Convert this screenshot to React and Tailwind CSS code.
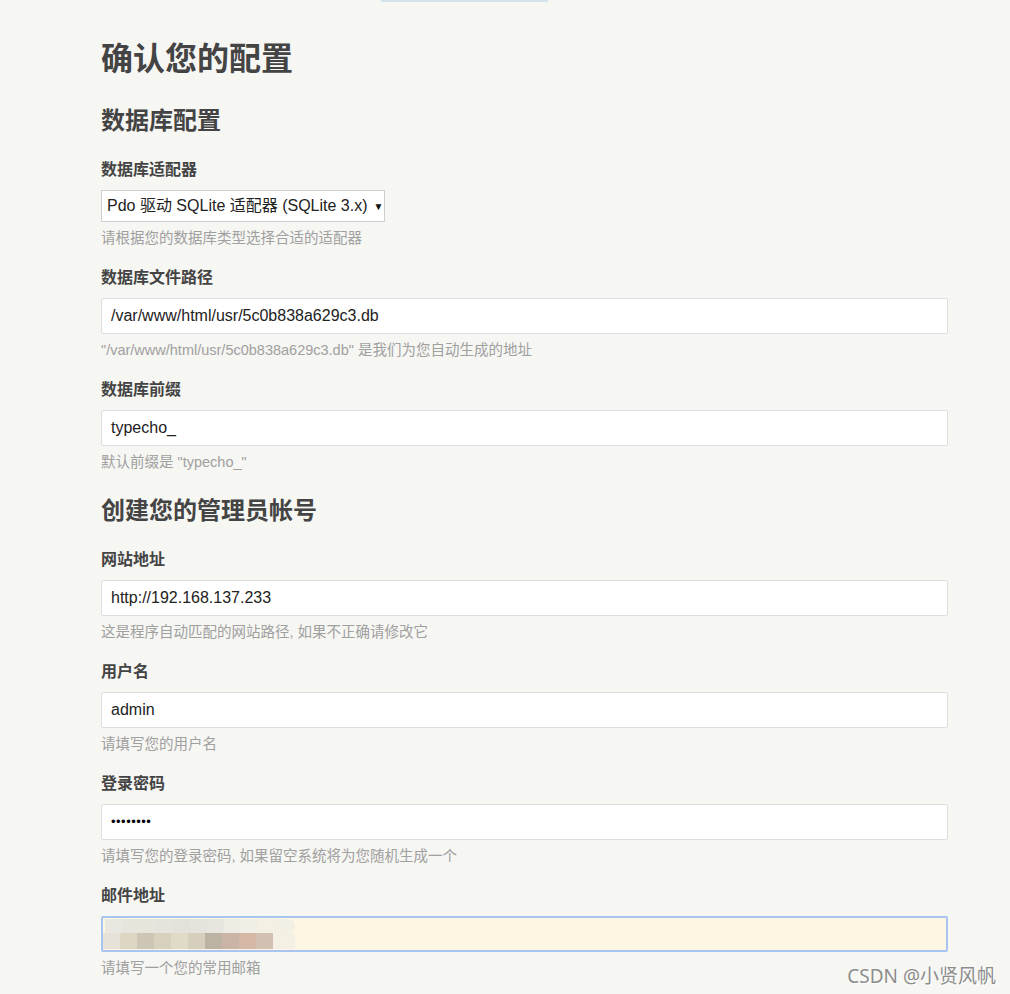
import React from 'react';

const FONT = { fontFamily: '"Liberation Sans", "Noto Sans CJK SC", sans-serif' };

const topBlocks = ['#e9e8e0', '#e6e5db', '#e6e5db', '#e5e4dc', '#e3e2da', '#e5e4dc', '#e6e6de', '#eeede4', '#f1efe5', '#f4f1e4'];
const midBlocks = ['#e6e2d8', '#ddd6c2', '#cdc6b6', '#d7d1bd', '#e0dbc6', '#d6cfbe', '#bdb3a4', '#c9b4a5', '#d4b7a4', '#d2c1b2'];

const Label = ({ children }) => (
  <div className="text-[16px] leading-[20px] font-bold text-[#444]">{children}</div>
);

const Desc = ({ children }) => (
  <div className="mt-[6px] text-[14.5px] leading-[20px] text-[#a0a0a0]">{children}</div>
);

const TextBox = ({ children }) => (
  <div className="mt-[10px] h-[36px] w-full flex items-center px-[9px] bg-white border border-[#dedede] rounded-[2px] text-[16px] text-[#222]">
    {children}
  </div>
);

const Field = ({ label, value, desc, first }) => (
  <div className={first ? '' : 'mt-[20px]'}>
    <Label>{label}</Label>
    <TextBox>{value}</TextBox>
    <Desc>{desc}</Desc>
  </div>
);

export default function App() {
  return (
    <div className="relative min-h-[994px] bg-[#f6f6f3]" style={FONT}>
      {/* top strip */}
      <div className="ml-[381px] w-[167px] h-[2px] bg-[#d3e2ec]" />

      <div className="ml-[101px] w-[847px]">
        <h1 className="mt-[37px] text-[32px] leading-[40px] font-bold text-[#444]">确认您的配置</h1>

        <h2 className="mt-[27px] text-[24px] leading-[30px] font-bold text-[#444]">数据库配置</h2>

        <div className="mt-[24px]">
          <Label>数据库适配器</Label>
          <div className="mt-[10px] h-[32px] w-[284px] flex items-center gap-[6px] pl-[5px] bg-white border border-[#cfcfcf] text-[16px] text-[#222]">
            <span>Pdo 驱动 SQLite 适配器 (SQLite 3.x)</span>
            <span className="text-[10px] text-[#111]">▼</span>
          </div>
          <Desc>请根据您的数据库类型选择合适的适配器</Desc>
        </div>

        <Field label="数据库文件路径" value="/var/www/html/usr/5c0b838a629c3.db" desc={'"/var/www/html/usr/5c0b838a629c3.db" 是我们为您自动生成的地址'} />
        <Field label="数据库前缀" value="typecho_" desc={'默认前缀是 "typecho_"'} />

        <h2 className="mt-[24px] text-[24px] leading-[30px] font-bold text-[#444]">创建您的管理员帐号</h2>

        <div className="mt-[24px]">
          <Field first label="网站地址" value="http://192.168.137.233" desc="这是程序自动匹配的网站路径, 如果不正确请修改它" />
        </div>
        <Field label="用户名" value="admin" desc="请填写您的用户名" />
        <Field
          label="登录密码"
          value={<span className="text-[13px] tracking-[0.5px] text-black">••••••••</span>}
          desc="请填写您的登录密码, 如果留空系统将为您随机生成一个"
        />

        <div className="mt-[20px]">
          <Label>邮件地址</Label>
          <div className="mt-[10px] h-[36px] w-full flex flex-col justify-center bg-[#fcf6e2] border-2 border-[#a8c4f0] rounded-[2px] overflow-hidden">
            <div className="flex h-[14px] pl-[2px]">
              {topBlocks.map((c, i) => (
                <div key={i} className="w-[17px] h-full" style={{ background: c }} />
              ))}
              <div className="w-[20px] h-full rounded-r-full bg-[#f2efe4]" />
            </div>
            <div className="flex h-[16px]">
              {midBlocks.map((c, i) => (
                <div key={i} className="w-[17px] h-full" style={{ background: c }} />
              ))}
              <div className="w-[22px] h-full bg-[#f4f0e3]" />
            </div>
          </div>
          <Desc>请填写一个您的常用邮箱</Desc>
        </div>
      </div>

      {/* watermark */}
      <div
        className="absolute right-[14px] bottom-[6px] text-[19px] leading-[24px] text-[#8c8c8c]"
        style={{ fontFamily: '"Noto Sans", "Noto Sans CJK SC", sans-serif', textShadow: '1px 1px 0 #ffffff' }}
      >
        CSDN @小贤风帆
      </div>
    </div>
  );
}
